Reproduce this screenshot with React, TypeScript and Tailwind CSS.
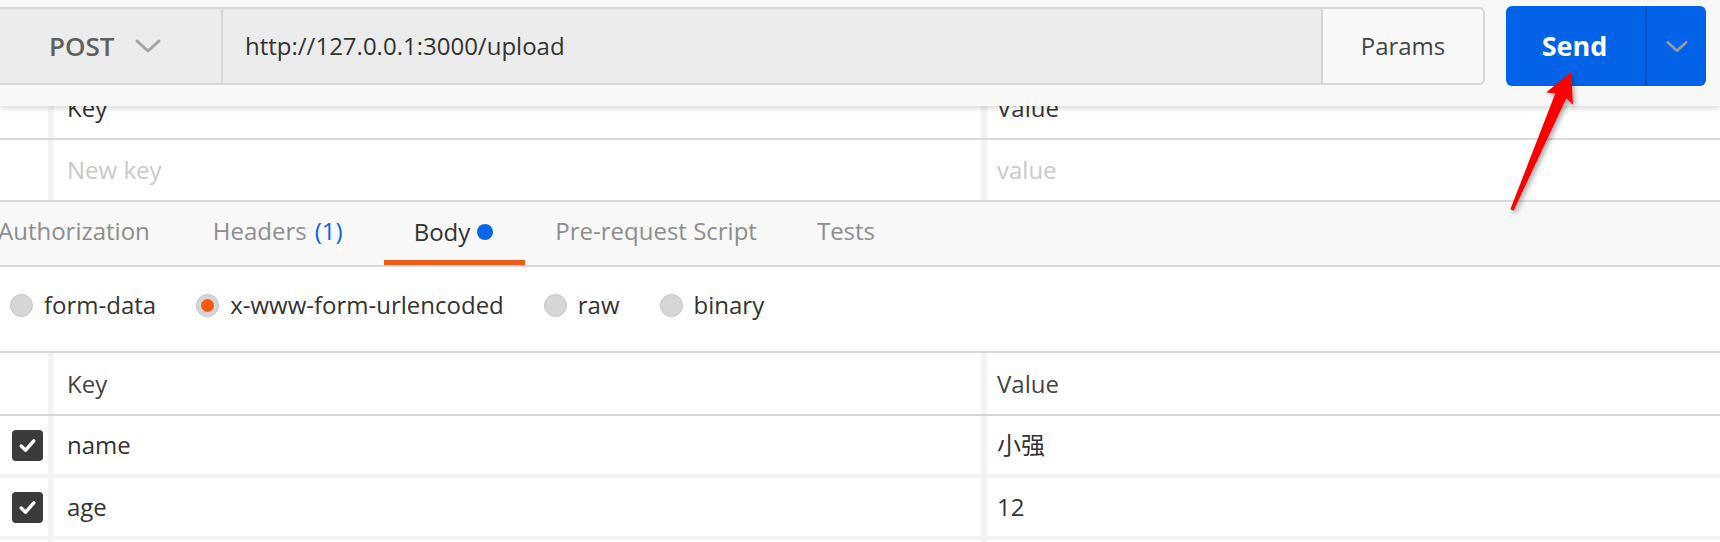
import React from 'react';

const Chevron = ({ className }: { className?: string }) => (
  <svg viewBox="0 0 26 14" className={className} fill="none">
    <polyline points="2,2 13,12 24,2" stroke="currentColor" strokeWidth="3" strokeLinecap="round" strokeLinejoin="round" />
  </svg>
);

const Radio = ({ checked }: { checked?: boolean }) => (
  <span className="flex h-[23px] w-[23px] items-center justify-center rounded-full border border-[#c4c4c4] bg-[#d6d6d6]">
    {checked && <span className="h-[13px] w-[13px] rounded-full bg-[#f05a16]" />}
  </span>
);

const Check = () => (
  <span className="flex h-[31px] w-[31px] items-center justify-center rounded-[4px] bg-[#3b3b3b]">
    <svg viewBox="0 0 20 20" className="h-[21px] w-[21px]" fill="none">
      <polyline points="4,10.5 8.2,14.5 16,5.5" stroke="white" strokeWidth="3.2" strokeLinecap="round" strokeLinejoin="round" />
    </svg>
  </span>
);

type RowProps = {
  keyText: React.ReactNode;
  value: React.ReactNode;
  checked?: boolean;
  className?: string;
  muted?: boolean;
};

function Row({ keyText, value, checked, className, muted }: RowProps) {
  return (
    <div className={`flex ${className ?? ''}`}>
      <div className="flex w-[48px] items-center pl-[12px]">{checked && <Check />}</div>
      <div className={`flex w-[933px] items-center border-l-[6px] border-[#f3f3f3] pl-[13px] ${muted ? 'text-[#c9c9c9]' : ''}`}>
        {keyText}
      </div>
      <div className={`flex flex-1 items-center border-l-[6px] border-[#f3f3f3] pl-[10px] ${muted ? 'text-[#c9c9c9]' : ''}`}>
        {value}
      </div>
    </div>
  );
}

export default function App() {
  return (
    <div className="relative h-[542px] w-[1720px] overflow-hidden bg-white font-['Open_Sans','Noto_Sans_CJK_SC',sans-serif] text-[24px] text-[#333]">
      {/* request bar */}
      <div className="relative z-10 flex h-[106px] items-start bg-[#f8f8f8] pt-[6px] shadow-[0_3px_5px_rgba(0,0,0,0.13)]">
        <div className="mt-px flex h-[78px] w-[1485px] rounded-r-md border-y-2 border-r-2 border-[#d6d6d6]">
          <div className="flex w-[223px] items-center border-r-2 border-[#d6d6d6] bg-[#ececec] pl-[49px]">
            <span className="text-[26px] font-semibold text-[#606060]">POST</span>
            <Chevron className="ml-[21px] h-[14px] w-[26px] text-[#a3a3a3]" />
          </div>
          <div className="flex flex-1 items-center bg-[#ececec] pl-[22px]">http://127.0.0.1:3000/upload</div>
          <div className="flex w-[162px] items-center justify-center rounded-r-md border-l-2 border-[#d6d6d6] bg-[#f8f8f8] text-[#444]">
            Params
          </div>
        </div>
        <div className="ml-[21px] flex h-[80px] w-[200px] overflow-hidden rounded-md bg-[#0263e8]">
          <div className="flex flex-1 items-center justify-center pr-[2px] text-[27px] font-bold text-white">Send</div>
          <div className="flex w-[61px] items-center justify-center border-l-2 border-[#0554c2]">
            <Chevron className="h-[13px] w-[22px] text-[#9b9b9b]" />
          </div>
        </div>
      </div>

      {/* params table, scrolled under the bar */}
      <div className="-mt-[28px]">
        <Row keyText="Key" value="Value" className="h-[62px] border-b-2 border-[#d9d9d9]" />
        <Row keyText="New key" value="value" muted className="h-[62px] border-b-2 border-[#d9d9d9]" />
      </div>

      {/* tabs */}
      <div className="flex h-[65px] border-b-2 border-[#d9d9d9] bg-[#f8f8f8] text-[#8d8d8d]">
        <div className="-ml-[2px] flex items-center pb-[6px] pr-[32px]">Authorization</div>
        <div className="flex items-center px-[31px] pb-[6px]">
          Headers<span className="ml-[8px] text-[#0a64e6]">(1)</span>
        </div>
        <div className="ml-[10px] flex items-center border-b-[5px] border-[#f05a16] pl-[30px] pr-[32px] pt-px text-[#333]">
          Body
          <span className="ml-[7px] h-[16px] w-[16px] rounded-full bg-[#0a64e6]" />
        </div>
        <div className="flex items-center px-[30px] pb-[6px]">Pre-request Script</div>
        <div className="flex items-center px-[30px] pb-[6px]">Tests</div>
      </div>

      {/* body type */}
      <div className="flex h-[86px] items-center gap-[40px] border-b-2 border-[#d6d6d6] pb-[8px] pl-[10px]">
        <label className="flex items-center gap-[11px]">
          <Radio />
          form-data
        </label>
        <label className="flex items-center gap-[11px]">
          <Radio checked />
          x-www-form-urlencoded
        </label>
        <label className="flex items-center gap-[11px]">
          <Radio />
          raw
        </label>
        <label className="flex items-center gap-[11px]">
          <Radio />
          binary
        </label>
      </div>

      {/* body table */}
      <div>
        <Row keyText="Key" value="Value" className="h-[63px] border-b-2 border-[#d6d6d6] text-[#444]" />
        <Row keyText="name" value="小强" checked className="h-[62px] border-b-4 border-[#f3f3f3]" />
        <Row keyText="age" value="12" checked className="h-[62px] border-b-4 border-[#f3f3f3]" />
        <Row keyText="" value="" className="h-[62px]" />
      </div>

      {/* annotation arrow */}
      <svg className="pointer-events-none absolute inset-0 z-20" width="1720" height="542" viewBox="0 0 1720 542">
        <defs>
          <filter id="sh" x="-50%" y="-50%" width="200%" height="200%">
            <feDropShadow dx="2" dy="3" stdDeviation="2.5" floodColor="#000" floodOpacity="0.35" />
          </filter>
        </defs>
        <polygon
          points="1510.4,209.3 1555.3,93.5 1546.2,92.6 1571,72 1573,104.8 1566.3,98.3 1513.6,210.7"
          fill="#fb0000"
          strokeLinejoin="round"
          filter="url(#sh)"
        />
      </svg>
    </div>
  );
}
